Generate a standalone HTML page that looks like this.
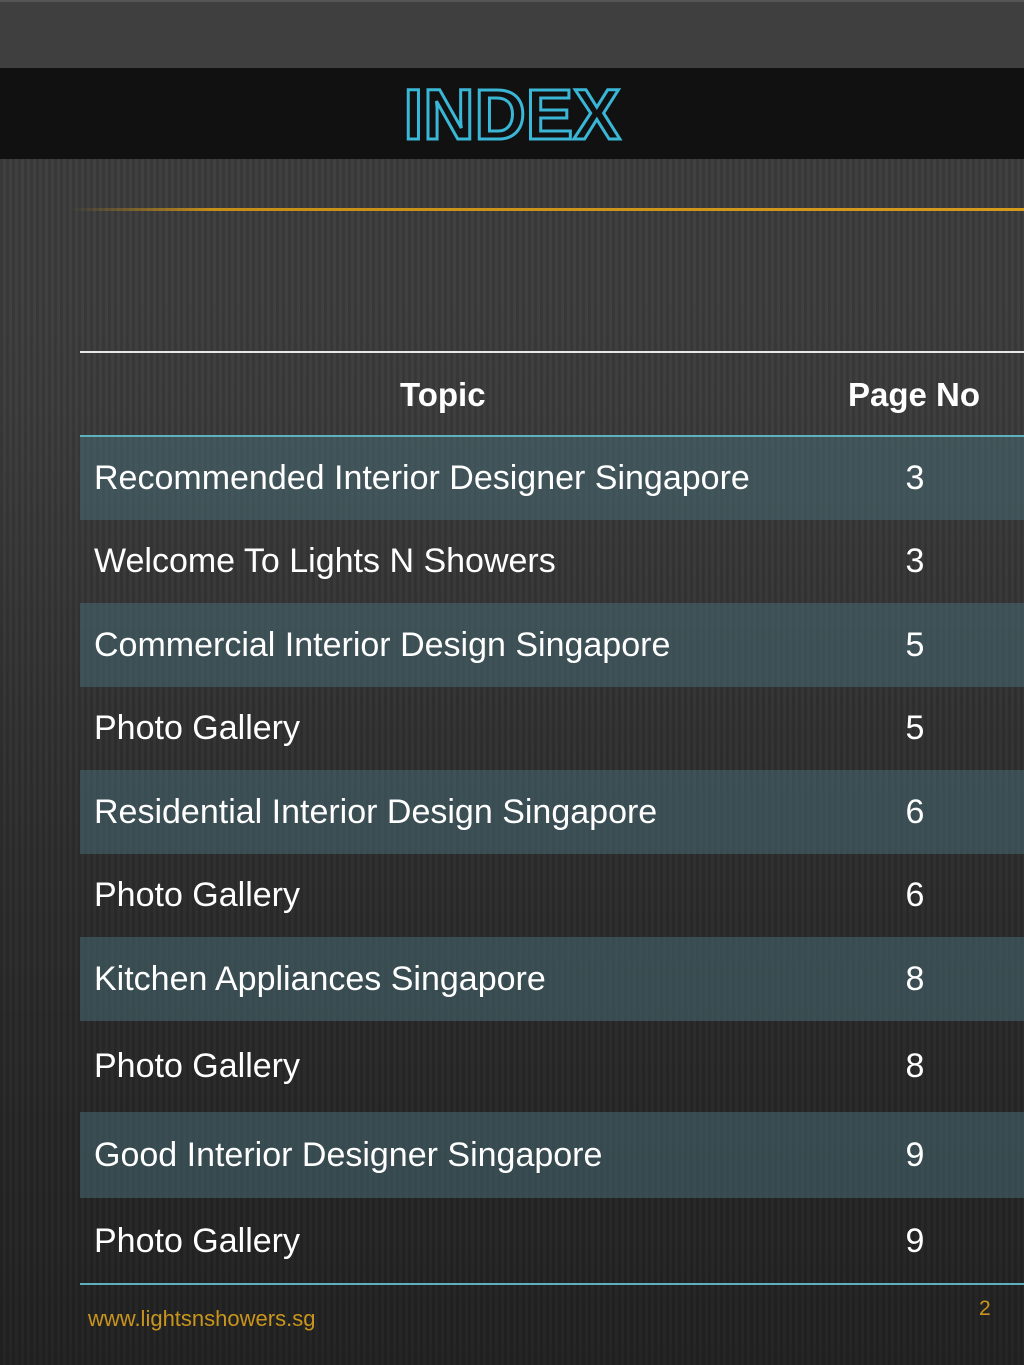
<!DOCTYPE html>
<html><head><meta charset="utf-8"><style>
*{margin:0;padding:0;box-sizing:border-box}
body{width:1024px;height:1365px;overflow:hidden;position:relative;font-family:"Liberation Sans",sans-serif;
background:linear-gradient(#3e3e3e 0px,#3c3c3c 400px,#2c2c2c 900px,#222 1365px);}
.stripes{position:absolute;left:0;top:158px;width:1024px;height:1207px;
background:repeating-linear-gradient(90deg,rgba(0,0,0,0.08) 0 3px,rgba(255,255,255,0.015) 3px 6px);}
.top{position:absolute;left:0;top:0;width:1024px;height:68px;background:#3f3f3f;border-top:2px solid #555}
.band{position:absolute;left:0;top:68px;width:1024px;height:91px;background:#111}
.title{position:absolute;left:0;top:70px;width:1024px;text-align:center;font-weight:bold;font-size:71px;line-height:91px;color:#111;-webkit-text-stroke:3px #3ab6d6;}
.gold{position:absolute;left:70px;top:208px;width:954px;height:3px;background:linear-gradient(90deg,rgba(200,140,20,0),#c58e18 15%,#d49a1c);}
.white{position:absolute;left:80px;top:351px;width:944px;height:2px;background:#e8e8e8}
.row{position:absolute;left:80px;width:944px;color:#fff;font-size:34px;display:flex;align-items:center}
.row .t{position:absolute;left:14px}
.row .n{position:absolute;left:824px;width:22px;text-align:center}
.sh{background:rgba(70,105,115,0.55)}
.hdr{font-weight:bold;font-size:33px}
.cy{position:absolute;left:80px;width:944px;height:2px;background:#5fb0bf}
.foot{position:absolute;left:88px;top:1306px;color:#c9951c;font-size:22px}
.pg{position:absolute;left:979px;top:1297px;color:#c9951c;font-size:21px}
</style></head><body>
<div class="stripes"></div>
<div class="top"></div>
<div class="band"></div>
<div class="title">INDEX</div>
<div class="gold"></div>
<div class="white"></div>
<div class="row hdr" style="top:353px;height:83px"><span style="position:absolute;left:320px">Topic</span><span style="position:absolute;left:768px">Page No</span></div>
<div class="cy" style="top:435px"></div>
<div class="row sh" style="top:437px;height:83px"><span class="t">Recommended Interior Designer Singapore</span><span class="n">3</span></div>
<div class="row" style="top:520px;height:83px"><span class="t">Welcome To Lights N Showers</span><span class="n">3</span></div>
<div class="row sh" style="top:603px;height:84px"><span class="t">Commercial Interior Design Singapore</span><span class="n">5</span></div>
<div class="row" style="top:687px;height:83px"><span class="t">Photo Gallery</span><span class="n">5</span></div>
<div class="row sh" style="top:770px;height:84px"><span class="t">Residential Interior Design Singapore</span><span class="n">6</span></div>
<div class="row" style="top:854px;height:83px"><span class="t">Photo Gallery</span><span class="n">6</span></div>
<div class="row sh" style="top:937px;height:84px"><span class="t">Kitchen Appliances Singapore</span><span class="n">8</span></div>
<div class="row" style="top:1021px;height:91px"><span class="t">Photo Gallery</span><span class="n">8</span></div>
<div class="row sh" style="top:1112px;height:86px"><span class="t">Good Interior Designer Singapore</span><span class="n">9</span></div>
<div class="row" style="top:1198px;height:86px"><span class="t">Photo Gallery</span><span class="n">9</span></div>
<div class="cy" style="top:1283px"></div>
<div class="foot">www.lightsnshowers.sg</div>
<div class="pg">2</div>
</body></html>
